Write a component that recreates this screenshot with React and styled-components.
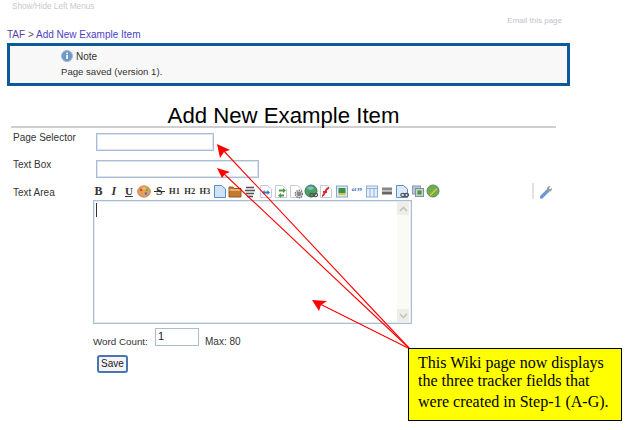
import React from 'react';
import styled, { createGlobalStyle } from 'styled-components';

const GlobalStyle = createGlobalStyle`
  html, body {
    margin: 0;
    padding: 0;
    background: #fff;
  }
`;

const Page = styled.div`
  position: relative;
  width: 631px;
  height: 430px;
  overflow: hidden;
  background: #fff;
  color: #333;
  font-family: "Liberation Sans", Arial, sans-serif;
  font-size: 10px;
`;

const MenuToggle = styled.div`
  height: 14px;
  line-height: 14px;
  padding-left: 12px;
  font-size: 8.2px;
  color: #c6cad0;
`;

const EmailLink = styled.div`
  height: 14px;
  line-height: 14px;
  text-align: right;
  padding-right: 69px;
  font-size: 8px;
  color: #bcc4cc;
`;

const Breadcrumb = styled.div`
  height: 15px;
  line-height: 13px;
  padding-left: 7px;
  font-size: 10px;
  color: #555;
  a {
    color: #4a44c4;
    text-decoration: none;
  }
`;

const Crumb = styled.span`
  color: #5a3fa0;
`;

const NoteBox = styled.div`
  box-sizing: border-box;
  width: 563px;
  height: 43px;
  margin-left: 7px;
  border: 3px solid #0a5a9c;
  background: #f8f8f8;
  padding: 2px 0 0 51px;
  font-size: 9.6px;
`;

const NoteTitle = styled.div`
  display: flex;
  align-items: center;
  gap: 3px;
  height: 16px;
  font-size: 10px;
`;

const NoteText = styled.div`
  height: 14px;
  line-height: 14px;
  margin-top: 1px;
`;

const Title = styled.h1`
  box-sizing: border-box;
  width: 545px;
  height: 42px;
  margin: 0 0 0 11px;
  padding-top: 18px;
  border-bottom: 2px solid #cfcfcf;
  text-align: center;
  color: #000;
  font-size: 22.2px;
  font-weight: 400;
  line-height: 23px;
`;

const Form = styled.div`
  padding: 2px 0 0 13px;
`;

const Row = styled.div`
  display: flex;
  align-items: flex-start;
  height: ${(p) => p.$height}px;
`;

const Label = styled.div`
  width: 83px;
  padding-top: 1px;
  line-height: 14px;
`;

const TextInput = styled.div`
  box-sizing: border-box;
  width: ${(p) => p.$width}px;
  height: 18px;
  margin-top: 3px;
  border: 1px solid #a9bdd3;
  box-shadow: inset 0 0 0 1px #dbe4ee;
  background: #fff;
`;

const Toolbar = styled.div`
  display: flex;
  align-items: center;
  height: 16px;
  margin: -2px 0 0 -5px;
`;

const ToolButton = styled.div`
  flex: none;
  display: flex;
  align-items: center;
  justify-content: center;
  width: 15.2px;
  height: 16px;
  color: #333;
  font-family: "Liberation Serif", serif;
  font-weight: 700;
  font-style: ${(p) => (p.$italic ? 'italic' : 'normal')};
  text-decoration: ${(p) => p.$decoration || 'none'};
  font-size: ${(p) => p.$size || 11}px;
`;

const StrikeLetter = styled.span`
  position: relative;
  &::after {
    content: '';
    position: absolute;
    left: -2px;
    right: -2px;
    top: 7px;
    height: 1px;
    background: #333;
  }
`;

const QuoteMarks = styled.span`
  color: #4f86c6;
  font-size: 11px;
  line-height: 12px;
`;

const ToolSeparator = styled.div`
  width: 2px;
  height: 16px;
  margin-left: 92px;
  background: #e2e2e2;
`;

const WrenchButton = styled.div`
  display: flex;
  margin-left: 6px;
`;

const EditorBox = styled.div`
  box-sizing: border-box;
  display: flex;
  justify-content: space-between;
  width: 319px;
  height: 124px;
  margin-left: 80px;
  padding: 1px;
  border: 1px solid #a9bdd3;
  box-shadow: inset 0 0 0 1px #e4ebf2;
  background: #fff;
`;

const Caret = styled.div`
  width: 1px;
  height: 14px;
  margin: 1px 0 0 1px;
  background: #333;
`;

const ScrollTrack = styled.div`
  display: flex;
  flex-direction: column;
  justify-content: space-between;
  width: 12px;
  margin-right: 1px;
  background: #fbfbf6;
`;

const ScrollButton = styled.div`
  display: flex;
  align-items: center;
  justify-content: center;
  height: 13px;
  background: #eeeee8;
`;

const CountRow = styled.div`
  display: flex;
  align-items: center;
  height: 18px;
  margin: 4px 0 0 80px;
`;

const CountLabel = styled.div`
  width: 62px;
  padding-top: 8px;
  font-size: 9.8px;
`;

const CountInput = styled.div`
  box-sizing: border-box;
  width: 44px;
  height: 18px;
  padding-left: 2px;
  line-height: 15px;
  color: #222;
  border: 1px solid #a9bdd3;
  font-size: 11px;
`;

const MaxLabel = styled.div`
  margin-left: 6px;
  padding-top: 8px;
`;

const SaveButton = styled.div`
  box-sizing: border-box;
  width: 31px;
  height: 18px;
  margin: 9px 0 0 84px;
  border: 2px solid #4a74b4;
  border-radius: 3px;
  background: #f4f4f4;
  color: #222;
  text-align: center;
  line-height: 14px;
  font-size: 10px;
`;

const ArrowLayer = styled.svg`
  position: absolute;
  inset: 0;
  pointer-events: none;
`;

const Callout = styled.div`
  position: absolute;
  left: 408px;
  top: 348px;
  box-sizing: border-box;
  width: 214px;
  height: 73px;
  padding: 5px 0 0 9px;
  border: 1px solid #000;
  background: #ff0;
  color: #000;
  font-family: "Liberation Serif", "Times New Roman", serif;
  font-size: 16px;
  white-space: nowrap;
`;

const CalloutLine = styled.div`
  height: ${(p) => p.$height}px;
  line-height: 17px;
`;

const InfoIcon = () => (
  <svg width="12" height="12" viewBox="0 0 12 12">
    <circle cx="6" cy="6" r="5.5" fill="#6f97c6" stroke="#9db8d8" />
    <rect x="5.2" y="5" width="1.7" height="4" fill="#fff" />
    <rect x="5.2" y="2.6" width="1.7" height="1.6" fill="#fff" />
  </svg>
);

const Icon = ({ children, w = 14 }) => (
  <svg width={w} height="15" viewBox="0 0 14 15">
    {children}
  </svg>
);

const Doc = ({ fill = '#fff', stroke = '#c6ccd4' }) => (
  <path d="M1.5 1.5h7l4 3.5v8.5h-11z" fill={fill} stroke={stroke} />
);

const Chain = () => (
  <g fill="none" stroke="#555" strokeWidth="1.1">
    <ellipse cx="8" cy="11" rx="2.2" ry="1.6" />
    <ellipse cx="11.5" cy="11" rx="2.2" ry="1.6" />
  </g>
);

const Gear = ({ cx = 10, cy = 10 }) => (
  <g>
    <circle cx={cx} cy={cy} r="3.6" fill="none" stroke="#777" strokeWidth="1.6" strokeDasharray="1.4 0.9" />
    <circle cx={cx} cy={cy} r="2.4" fill="#888" />
  </g>
);

const tools = [
  <ToolButton key="b" $size={12}>B</ToolButton>,
  <ToolButton key="i" $italic $size={12}>I</ToolButton>,
  <ToolButton key="u" $decoration="underline" $size={11}>U</ToolButton>,
  <ToolButton key="palette">
    <Icon>
      <ellipse cx="7" cy="7.5" rx="6.3" ry="5.6" fill="#e0a060" stroke="#c08040" />
      <circle cx="4" cy="6" r="1.2" fill="#e04030" />
      <circle cx="7" cy="4.5" r="1.2" fill="#f0d040" />
      <circle cx="10" cy="6" r="1.2" fill="#60b050" />
      <circle cx="9" cy="9.5" r="1.2" fill="#4070d0" />
    </Icon>
  </ToolButton>,
  <ToolButton key="s" $size={12}>
    <StrikeLetter>S</StrikeLetter>
  </ToolButton>,
  <ToolButton key="h1" $size={8.5}>H1</ToolButton>,
  <ToolButton key="h2" $size={8.5}>H2</ToolButton>,
  <ToolButton key="h3" $size={8.5}>H3</ToolButton>,
  <ToolButton key="page">
    <Icon>
      <Doc fill="#cfe2f6" stroke="#5c8cc8" />
    </Icon>
  </ToolButton>,
  <ToolButton key="folder">
    <Icon>
      <path d="M1 3h4l1 1.5h7V13H1z" fill="#c47a2c" stroke="#8a5a24" />
      <rect x="1.5" y="5" width="11" height="2" fill="#e8b070" />
    </Icon>
  </ToolButton>,
  <ToolButton key="align">
    <Icon>
      <g stroke="#555" strokeWidth="1.6">
        <path d="M3 3.5h8" />
        <path d="M2 6.5h10" />
        <path d="M3 9.5h8" />
        <path d="M4 12.5h6" />
      </g>
    </Icon>
  </ToolButton>,
  <ToolButton key="linkdoc">
    <Icon>
      <Doc />
      <path d="M3 8.5l2.5-2.5v1.6h3V6l2.5 2.5L8.5 11V9.4h-3V11z" fill="#2f7fd0" />
    </Icon>
  </ToolButton>,
  <ToolButton key="swap">
    <Icon>
      <Doc />
      <path d="M5 5.5h4V4l3 2.5L9 9V7.5H5zM10 9v1.5H7V9l-3 2.5L7 14v-1.5h3z" fill="#4c9c44" />
    </Icon>
  </ToolButton>,
  <ToolButton key="docgear">
    <Icon>
      <Doc />
      <Gear />
    </Icon>
  </ToolButton>,
  <ToolButton key="globe">
    <Icon>
      <circle cx="7" cy="7" r="6" fill="#4ca05a" stroke="#3a7a70" />
      <path d="M3 4c2-2 5-2 7 0-1 2-5 3-7 0z" fill="#7fbcd8" />
      <Chain />
    </Icon>
  </ToolButton>,
  <ToolButton key="flash">
    <Icon>
      <Doc />
      <path d="M3 12c3 0 3-8 7-8M4 8h4" fill="none" stroke="#d8242a" strokeWidth="1.8" />
    </Icon>
  </ToolButton>,
  <ToolButton key="image">
    <Icon>
      <rect x="1.5" y="2" width="11" height="11" fill="#dbe8f4" stroke="#8aa8c8" />
      <rect x="3.5" y="4" width="7" height="5" fill="#3f9040" />
      <rect x="3.5" y="9" width="7" height="2" fill="#d8c040" />
    </Icon>
  </ToolButton>,
  <ToolButton key="quote">
    <QuoteMarks>“”</QuoteMarks>
  </ToolButton>,
  <ToolButton key="table">
    <Icon>
      <rect x="1.5" y="2" width="11" height="11" fill="#e6f0fa" stroke="#8db0d8" />
      <path d="M1.5 4.5h11M5 4.5V13M9 4.5V13" stroke="#8db0d8" />
    </Icon>
  </ToolButton>,
  <ToolButton key="rule">
    <Icon>
      <rect x="2" y="3.5" width="10" height="3" fill="#888" />
      <rect x="2" y="7.5" width="10" height="3" fill="#666" />
    </Icon>
  </ToolButton>,
  <ToolButton key="doclink">
    <Icon>
      <Doc fill="#dcebf9" stroke="#5c8cc8" />
      <Chain />
    </Icon>
  </ToolButton>,
  <ToolButton key="copy">
    <Icon>
      <rect x="1.5" y="2" width="8" height="8" fill="#b8c8d8" stroke="#8a9cb0" />
      <rect x="4.5" y="4.5" width="8" height="8" fill="#c4d4c4" stroke="#7c90a4" />
      <rect x="6.5" y="6.5" width="4" height="4" fill="#4c9044" />
    </Icon>
  </ToolButton>,
  <ToolButton key="edit">
    <Icon>
      <circle cx="7" cy="7" r="6" fill="#6cb04c" stroke="#5a8a50" />
      <path d="M3.5 11l7-7 1 1-7 7z" fill="#e8c040" />
      <path d="M10 3.5l1.5 1.5 1-1.5-1-1z" fill="#5a8ad0" />
    </Icon>
  </ToolButton>,
];

const Chevron = ({ up }) => (
  <svg width="9" height="6" viewBox="0 0 9 6">
    <path d={up ? 'M1 5l3.5-3.5L8 5' : 'M1 1l3.5 3.5L8 1'} fill="none" stroke="#c4c4bc" strokeWidth="1.6" />
  </svg>
);

const arrows = [
  { line: '409,348 222,149', head: '217,144 230,150 224,152 220,158' },
  { line: '409,348 222,172', head: '217,168 230,172 225,174 222,178' },
  { line: '408,348 318,303', head: '312,300 327,301 321,305 319,311' },
];

const App = () => {
  return (
    <Page>
      <GlobalStyle />
      <MenuToggle>Show/Hide Left Menus</MenuToggle>
      <EmailLink>Email this page</EmailLink>
      <Breadcrumb>
        <Crumb>TAF</Crumb> &gt; <a href="#item">Add New Example Item</a>
      </Breadcrumb>
      <NoteBox>
        <NoteTitle>
          <InfoIcon />
          Note
        </NoteTitle>
        <NoteText>Page saved (version 1).</NoteText>
      </NoteBox>
      <Title>Add New Example Item</Title>
      <Form>
        <Row $height={27}>
          <Label>Page Selector</Label>
          <TextInput $width={118} />
        </Row>
        <Row $height={28}>
          <Label>Text Box</Label>
          <TextInput $width={163} />
        </Row>
        <Row $height={15}>
          <Label>Text Area</Label>
          <Toolbar>
            {tools}
            <ToolSeparator />
            <WrenchButton>
              <svg width="13" height="15" viewBox="0 0 13 15">
                <path d="M1.5 13l6-6" stroke="#6f97d8" strokeWidth="3.4" strokeLinecap="round" />
                <path d="M7 5.5a3 3 0 0 1 3.5-3.5L9 4l1 1.5L12 4a3 3 0 0 1-3.5 3.5z" fill="#999" />
              </svg>
            </WrenchButton>
          </Toolbar>
        </Row>
        <EditorBox>
          <Caret />
          <ScrollTrack>
            <ScrollButton>
              <Chevron up />
            </ScrollButton>
            <ScrollButton>
              <Chevron />
            </ScrollButton>
          </ScrollTrack>
        </EditorBox>
        <CountRow>
          <CountLabel>Word Count:</CountLabel>
          <CountInput>1</CountInput>
          <MaxLabel>Max: 80</MaxLabel>
        </CountRow>
        <SaveButton>Save</SaveButton>
      </Form>
      <ArrowLayer width="631" height="430" viewBox="0 0 631 430">
        {arrows.map((a) => (
          <g key={a.head}>
            <polyline points={a.line} fill="none" stroke="#f00" strokeWidth="1.1" />
            <polygon points={a.head} fill="#f00" />
          </g>
        ))}
      </ArrowLayer>
      <Callout>
        <CalloutLine $height={18}>This Wiki page now displays</CalloutLine>
        <CalloutLine $height={21}>the three tracker fields that</CalloutLine>
        <CalloutLine $height={18}>were created in Step-1 (A-G).</CalloutLine>
      </Callout>
    </Page>
  );
};

export default App;
